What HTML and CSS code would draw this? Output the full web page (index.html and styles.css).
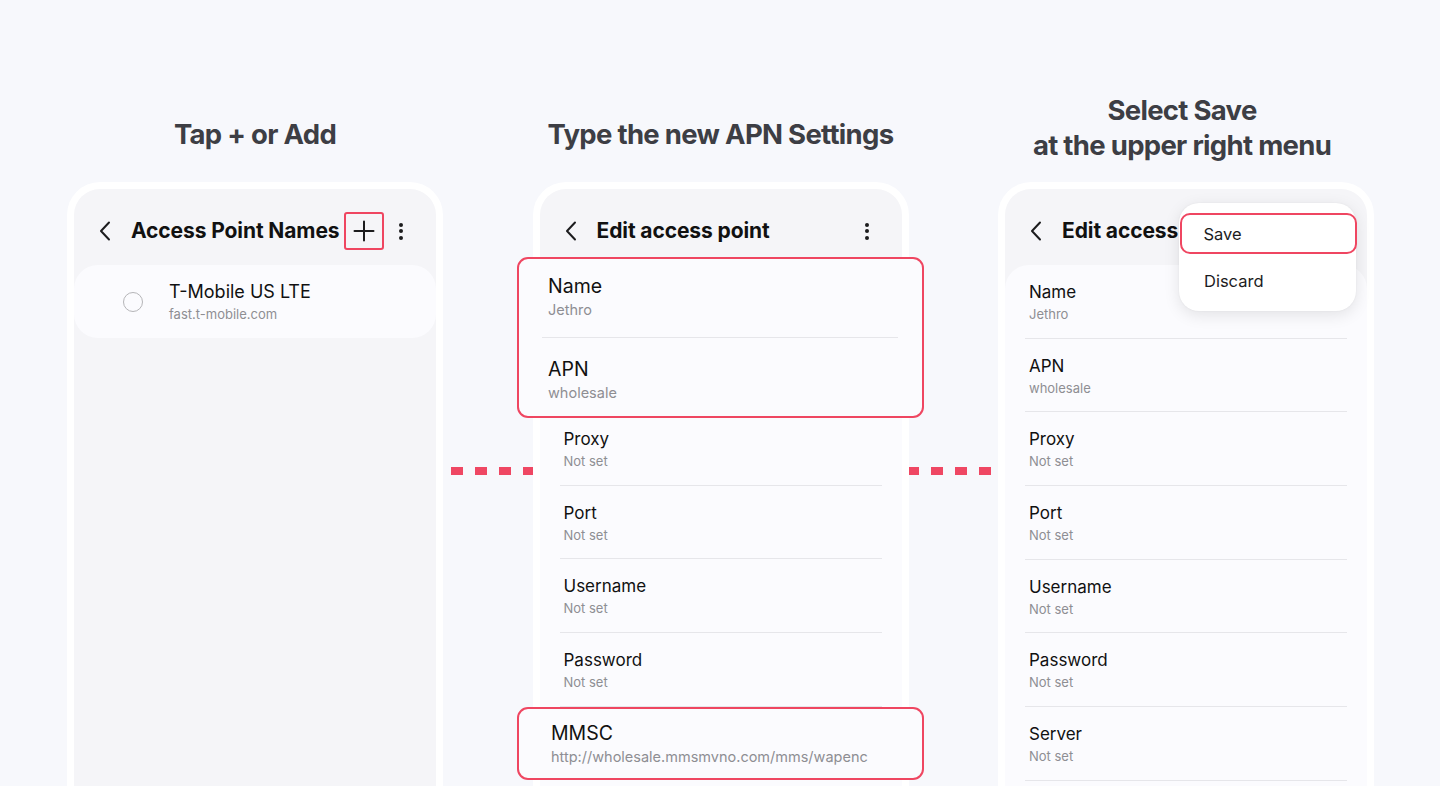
FILE: index.html
```html
<!DOCTYPE html>
<html lang="en">
<head>
<meta charset="utf-8">
<title>APN setup steps</title>
<link rel="stylesheet" href="styles.css">
</head>
<body>
<div class="stage">
  <div class="dots"></div>

  <section class="col">
    <h2 class="step-title">Tap + or Add</h2>
    <div class="phone">
      <header class="appbar">
        <svg class="back" viewBox="0 0 12 20"><path d="M10 1.5 L2 10 L10 18.5" fill="none" stroke="#1c1c1e" stroke-width="2" stroke-linecap="round" stroke-linejoin="round"/></svg>
        <h1 class="appbar-title">Access Point Names</h1>
        <span class="add-btn"><svg viewBox="0 0 22 22" width="22" height="22"><path d="M11 1.5v19M1.5 11h19" stroke="#1c1c1e" stroke-width="2" stroke-linecap="round"/></svg></span>
        <span class="kebab"><i></i><i></i><i></i></span>
      </header>
      <div class="apn-card">
        <span class="radio"></span>
        <div>
          <div class="apn-title">T-Mobile US LTE</div>
          <div class="apn-sub">fast.t-mobile.com</div>
        </div>
      </div>
    </div>
  </section>

  <section class="col">
    <h2 class="step-title">Type the new APN Settings</h2>
    <div class="phone">
      <header class="appbar">
        <svg class="back" viewBox="0 0 12 20"><path d="M10 1.5 L2 10 L10 18.5" fill="none" stroke="#1c1c1e" stroke-width="2" stroke-linecap="round" stroke-linejoin="round"/></svg>
        <h1 class="appbar-title">Edit access point</h1>
        <span class="kebab"><i></i><i></i><i></i></span>
      </header>
      <div class="list">
        <div class="zoom-group">
          <div class="zrow zrow-first">
            <div class="ztitle">Name</div>
            <div class="zsub">Jethro</div>
          </div>
          <div class="zrow zrow-second">
            <div class="ztitle">APN</div>
            <div class="zsub">wholesale</div>
          </div>
        </div>
        <div class="row"><div class="row-title">Proxy</div><div class="row-sub">Not set</div></div>
        <div class="row"><div class="row-title">Port</div><div class="row-sub">Not set</div></div>
        <div class="row"><div class="row-title">Username</div><div class="row-sub">Not set</div></div>
        <div class="row"><div class="row-title">Password</div><div class="row-sub">Not set</div></div>
        <div class="zoom-single">
          <div class="ztitle">MMSC</div>
          <div class="zsub">http://wholesale.mmsmvno.com/mms/wapenc</div>
        </div>
      </div>
    </div>
  </section>

  <section class="col">
    <h2 class="step-title two-line">Select Save<br>at the upper right menu</h2>
    <div class="phone">
      <header class="appbar">
        <svg class="back" viewBox="0 0 12 20"><path d="M10 1.5 L2 10 L10 18.5" fill="none" stroke="#1c1c1e" stroke-width="2" stroke-linecap="round" stroke-linejoin="round"/></svg>
        <h1 class="appbar-title">Edit access point</h1>
        <span class="kebab"><i></i><i></i><i></i></span>
      </header>
      <div class="list">
        <div class="row"><div class="row-title">Name</div><div class="row-sub">Jethro</div></div>
        <div class="row"><div class="row-title">APN</div><div class="row-sub">wholesale</div></div>
        <div class="row"><div class="row-title">Proxy</div><div class="row-sub">Not set</div></div>
        <div class="row"><div class="row-title">Port</div><div class="row-sub">Not set</div></div>
        <div class="row"><div class="row-title">Username</div><div class="row-sub">Not set</div></div>
        <div class="row"><div class="row-title">Password</div><div class="row-sub">Not set</div></div>
        <div class="row"><div class="row-title">Server</div><div class="row-sub">Not set</div></div>
      </div>
      <div class="menu">
        <div class="menu-item menu-save">Save</div>
        <div class="menu-item menu-discard">Discard</div>
      </div>
    </div>
  </section>
</div>
</body>
</html>
```

FILE: styles.css
```css
html, body {
  margin: 0;
  padding: 0;
}

body {
  background: #f7f8fc;
  font-family: Inter, "Noto Sans", sans-serif;
  color: #111;
  height: 786px;
  overflow: hidden;
}

.stage {
  position: relative;
  display: flex;
  align-items: flex-start;
  gap: 89.5px;
  padding-left: 67px;
  height: 786px;
  overflow: hidden;
}

.dots {
  position: absolute;
  left: 451px;
  top: 467px;
  width: 540px;
  height: 8px;
  background: repeating-linear-gradient(to right, #ef4763 0 12px, transparent 12px 24px);
}

.col {
  width: 376px;
  flex: none;
  display: flex;
  flex-direction: column;
}

.step-title {
  flex: none;
  margin: 0;
  height: 182px;
  box-sizing: border-box;
  padding-top: 116px;
  font-weight: 700;
  font-size: 27.5px;
  line-height: 36px;
  letter-spacing: -0.7px;
  color: #3d3e44;
  text-align: center;
}

.step-title.two-line {
  padding-top: 93px;
  padding-right: 8px;
  line-height: 35px;
}

.phone {
  position: relative;
  flex: none;
  height: 620px;
  box-sizing: border-box;
  border: 7px solid #fff;
  border-bottom: 0;
  border-radius: 33px 33px 0 0;
  background: #f5f5f8;
}

.appbar {
  height: 76px;
  box-sizing: border-box;
  padding: 8px 33px 0 25px;
  display: flex;
  align-items: center;
}

.back {
  width: 12px;
  height: 20px;
  flex: none;
}

.appbar-title {
  margin: 0 0 0 20px;
  font-weight: 700;
  font-size: 21px;
  line-height: 28px;
  letter-spacing: -0.1px;
  color: #111;
  white-space: nowrap;
}

.add-btn {
  margin-left: 4px;
  width: 40px;
  height: 38px;
  box-sizing: border-box;
  border: 2px solid #ef4661;
  border-radius: 3px;
  display: flex;
  align-items: center;
  justify-content: center;
  flex: none;
}

.kebab {
  margin-left: auto;
  display: flex;
  flex-direction: column;
  gap: 2.5px;
  flex: none;
}

.kebab i {
  display: block;
  width: 4px;
  height: 4px;
  border-radius: 50%;
  background: #1c1c1e;
}

.apn-card {
  height: 73px;
  background: #fbfbfe;
  border-radius: 24px;
  display: flex;
  align-items: center;
  padding-left: 49px;
}

.radio {
  width: 20px;
  height: 20px;
  box-sizing: border-box;
  border: 1.5px solid #b5b5b8;
  border-radius: 50%;
  margin-right: 26px;
  flex: none;
}

.apn-title {
  font-size: 18px;
  line-height: 22px;
  color: #111;
}

.apn-sub {
  margin-top: 2px;
  font-size: 13px;
  line-height: 18px;
  color: #8e8e93;
}

.list {
  background: #fbfbfe;
  border-radius: 24px 24px 0 0;
  height: 600px;
}

.row {
  height: 73.67px;
  box-sizing: border-box;
  margin: 0 20px;
  padding: 16px 4px 0;
  border-bottom: 1px solid #e6e6ea;
}

.row-title {
  font-size: 17px;
  line-height: 22px;
  color: #111;
}

.row-sub {
  margin-top: 2px;
  font-size: 13px;
  line-height: 18px;
  color: #8e8e93;
}

.zoom-group {
  position: relative;
  margin: -8px -22px -6px -23px;
  height: 161px;
  box-sizing: border-box;
  border: 2.5px solid #ef4661;
  border-radius: 11px;
  background: #fbfbfe;
}

.zrow {
  margin: 0 24px 0 23.5px;
  padding-left: 6px;
  box-sizing: border-box;
}

.zrow-first {
  height: 79px;
  padding-top: 14.5px;
  border-bottom: 1px solid #e6e6ea;
}

.zrow-second {
  height: 77px;
  padding-top: 18.5px;
}

.ztitle {
  font-size: 19.5px;
  line-height: 24px;
  color: #111;
}

.zsub {
  margin-top: 2px;
  font-size: 14.5px;
  line-height: 20px;
  color: #8e8e93;
}

.zoom-single {
  position: relative;
  margin: 0 -22px 0 -23px;
  height: 73px;
  box-sizing: border-box;
  padding: 12.5px 0 0 32.5px;
  border: 2.5px solid #ef4661;
  border-radius: 11px;
  background: #fbfbfe;
}

.menu {
  position: absolute;
  top: 14px;
  left: 174px;
  width: 177px;
  height: 108px;
  box-sizing: border-box;
  padding-top: 10px;
  border-radius: 20px;
  background: #fff;
  box-shadow: 0 4px 16px rgba(0, 0, 0, 0.10), 0 0 2px rgba(0, 0, 0, 0.06);
}

.menu-item {
  font-size: 16.5px;
  color: #1c1c1e;
  display: flex;
  align-items: center;
}

.menu-save {
  height: 41px;
  margin: 0 -1px 0 1px;
  box-sizing: border-box;
  padding-left: 21.5px;
  border: 2.5px solid #ef4661;
  border-radius: 10px;
}

.menu-discard {
  height: 54px;
  padding-left: 25px;
}
```
